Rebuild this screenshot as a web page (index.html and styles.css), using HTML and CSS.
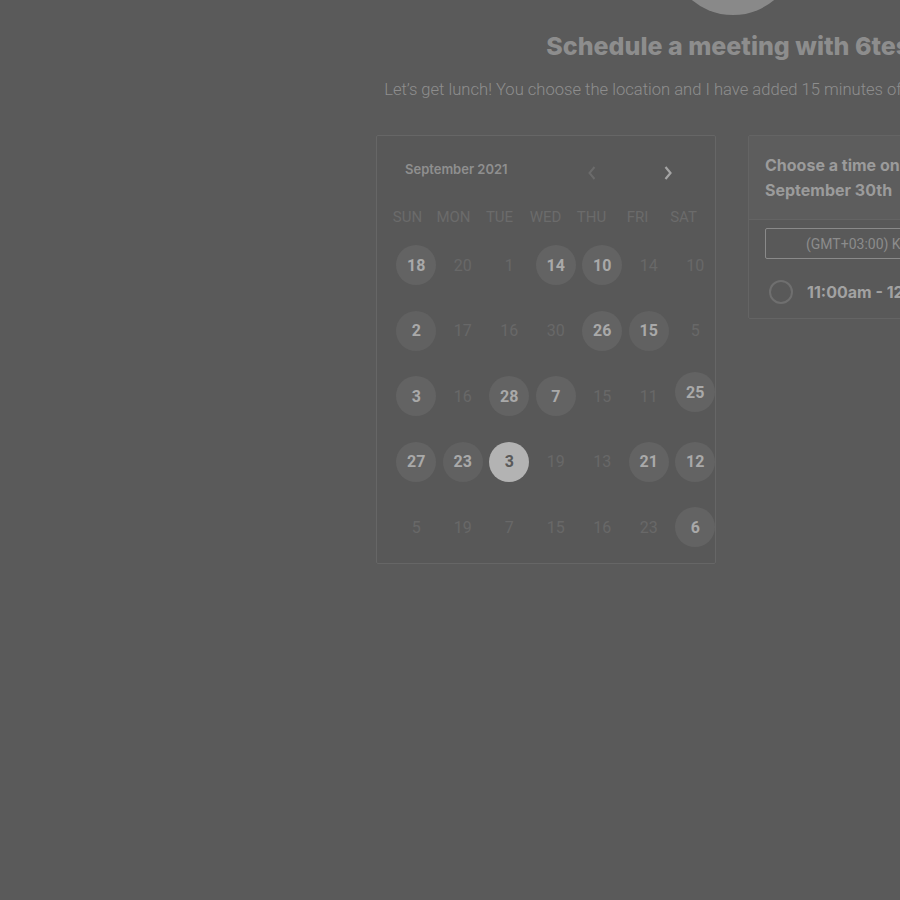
FILE: index.html
```html
<!DOCTYPE html>
<html>
<head>
<meta charset="utf-8">
<link rel="stylesheet" href="styles.css">
</head>
<body>
<div class="page">
  <div class="avatar"></div>
  <h1 class="title">Schedule a meeting with 6test</h1>
  <p class="subtitle">Let’s get lunch! You choose the location and I have added 15 minutes of travel time for each way.</p>
  <div class="booking">
    <div class="calendar">
      <div class="cal-head">
        <span class="month">September 2021</span>
        <div class="navs">
          <svg class="nav nav-prev" width="10" height="16" viewBox="0 0 10 16"><polyline points="7.5,2 2.5,8 7.5,14" fill="none" stroke="currentColor" stroke-width="2"/></svg>
          <svg class="nav nav-next" width="10" height="16" viewBox="0 0 10 16"><polyline points="2.5,2 7.5,8 2.5,14" fill="none" stroke="currentColor" stroke-width="2.2"/></svg>
        </div>
      </div>
      <div class="weekdays">
        <span>SUN</span><span>MON</span><span>TUE</span><span>WED</span><span>THU</span><span>FRI</span><span>SAT</span>
      </div>
      <div class="days">
        <span class="day on">18</span><span class="day">20</span><span class="day">1</span><span class="day on">14</span><span class="day on">10</span><span class="day">14</span><span class="day">10</span>
        <span class="day on tex">2</span><span class="day">17</span><span class="day">16</span><span class="day">30</span><span class="day on">26</span><span class="day on tex">15</span><span class="day">5</span>
        <span class="day on">3</span><span class="day">16</span><span class="day on">28</span><span class="day on">7</span><span class="day">15</span><span class="day">11</span><span class="day on up">25</span>
        <span class="day on">27</span><span class="day on tex">23</span><span class="day sel">3</span><span class="day">19</span><span class="day">13</span><span class="day on">21</span><span class="day on">12</span>
        <span class="day">5</span><span class="day">19</span><span class="day">7</span><span class="day">15</span><span class="day">16</span><span class="day">23</span><span class="day on">6</span>
      </div>
    </div>
    <div class="times">
      <div class="times-head">Choose a time on<br>September 30th</div>
      <div class="times-body">
        <div class="tz">(GMT+03:00) Kuwait, Riyadh</div>
        <div class="slot">
          <span class="radio"></span>
          <span class="slot-label">11:00am - 12:00pm</span>
        </div>
      </div>
    </div>
  </div>
</div>
</body>
</html>
```
FILE: styles.css
```css
html, body {
  margin: 0;
  padding: 0;
  background: #5a5a5a;
  overflow: hidden;
  width: 900px;
  height: 900px;
}

.page {
  width: 1466px;
  margin-top: -113px;
  display: flex;
  flex-direction: column;
  align-items: center;
  font-family: Roboto, "Liberation Sans", sans-serif;
}

.avatar {
  width: 128px;
  height: 128px;
  border-radius: 50%;
  background: #898989;
}

.title {
  margin: 15px 0 0;
  font-family: Inter, "Liberation Sans", sans-serif;
  font-weight: 800;
  font-size: 25px;
  line-height: 32px;
  color: #8d8d8d;
  white-space: nowrap;
}

.subtitle {
  margin: 18px 0 0;
  font-size: 16.6px;
  line-height: 20px;
  font-weight: 300;
  color: #8e8e8e;
  white-space: nowrap;
}

.booking {
  margin-top: 35px;
  display: flex;
  gap: 32px;
  align-items: flex-start;
}

.calendar {
  width: 338px;
  height: 427px;
  border: 1px solid #666666;
  border-radius: 2px;
  background: #585858;
}

.cal-head {
  display: flex;
  align-items: center;
  height: 38px;
  margin-top: 14px;
  padding-left: 28px;
}

.month {
  font-family: Inter, "Liberation Sans", sans-serif;
  font-weight: 600;
  font-size: 13px;
  color: #8f8f8f;
  width: 182px;
}

.navs {
  display: flex;
  align-items: center;
  gap: 66px;
  margin-top: 8px;
}

.nav-prev { color: #6b6b6b; }
.nav-next { color: #a4a4a4; }

.weekdays {
  display: grid;
  grid-template-columns: repeat(7, 46px);
  padding-left: 7.5px;
  margin-top: 17px;
  height: 24px;
  align-items: center;
  font-size: 15px;
  color: #6b6b6b;
}

.weekdays span { text-align: center; }

.days {
  display: grid;
  grid-template-columns: repeat(7, 46.5px);
  grid-auto-rows: 40px;
  row-gap: 25.5px;
  padding-left: 16px;
  margin-top: 16px;
}

.day {
  width: 40px;
  height: 40px;
  justify-self: center;
  display: flex;
  align-items: center;
  justify-content: center;
  border-radius: 50%;
  font-size: 16px;
  color: #686868;
}

.day.on {
  background: #636363;
  color: #a9a9a9;
  font-weight: 700;
}

.day.tex {
  background: #616161;
}

.day.up { margin-top: -4px; }

.day.sel {
  background: #b3b3b3;
  color: #5a5a5a;
  font-weight: 700;
}

.times {
  width: 340px;
  border: 1px solid #646464;
  border-radius: 2px;
  background: #595959;
}

.times-head {
  height: 84px;
  box-sizing: border-box;
  padding: 17px 16px 0;
  background: #5d5d5d;
  border-bottom: 1px solid #646464;
  font-family: Inter, "Liberation Sans", sans-serif;
  font-weight: 700;
  font-size: 16px;
  line-height: 25px;
  color: #9b9b9b;
}

.times-body {
  padding: 8px 16px 13px;
}

.tz {
  height: 31px;
  box-sizing: border-box;
  border: 1px solid #8a8a8a;
  border-radius: 2px;
  padding-left: 40px;
  display: flex;
  align-items: center;
  font-size: 14px;
  color: #8c8c8c;
}

.slot {
  display: flex;
  align-items: center;
  gap: 14px;
  margin-top: 20px;
  height: 26px;
  padding-left: 4px;
}

.radio {
  width: 20px;
  height: 20px;
  border: 2px solid #6f6f6f;
  border-radius: 50%;
}

.slot-label {
  font-family: Inter, "Liberation Sans", sans-serif;
  font-weight: 700;
  font-size: 16px;
  color: #a2a2a2;
}
```
